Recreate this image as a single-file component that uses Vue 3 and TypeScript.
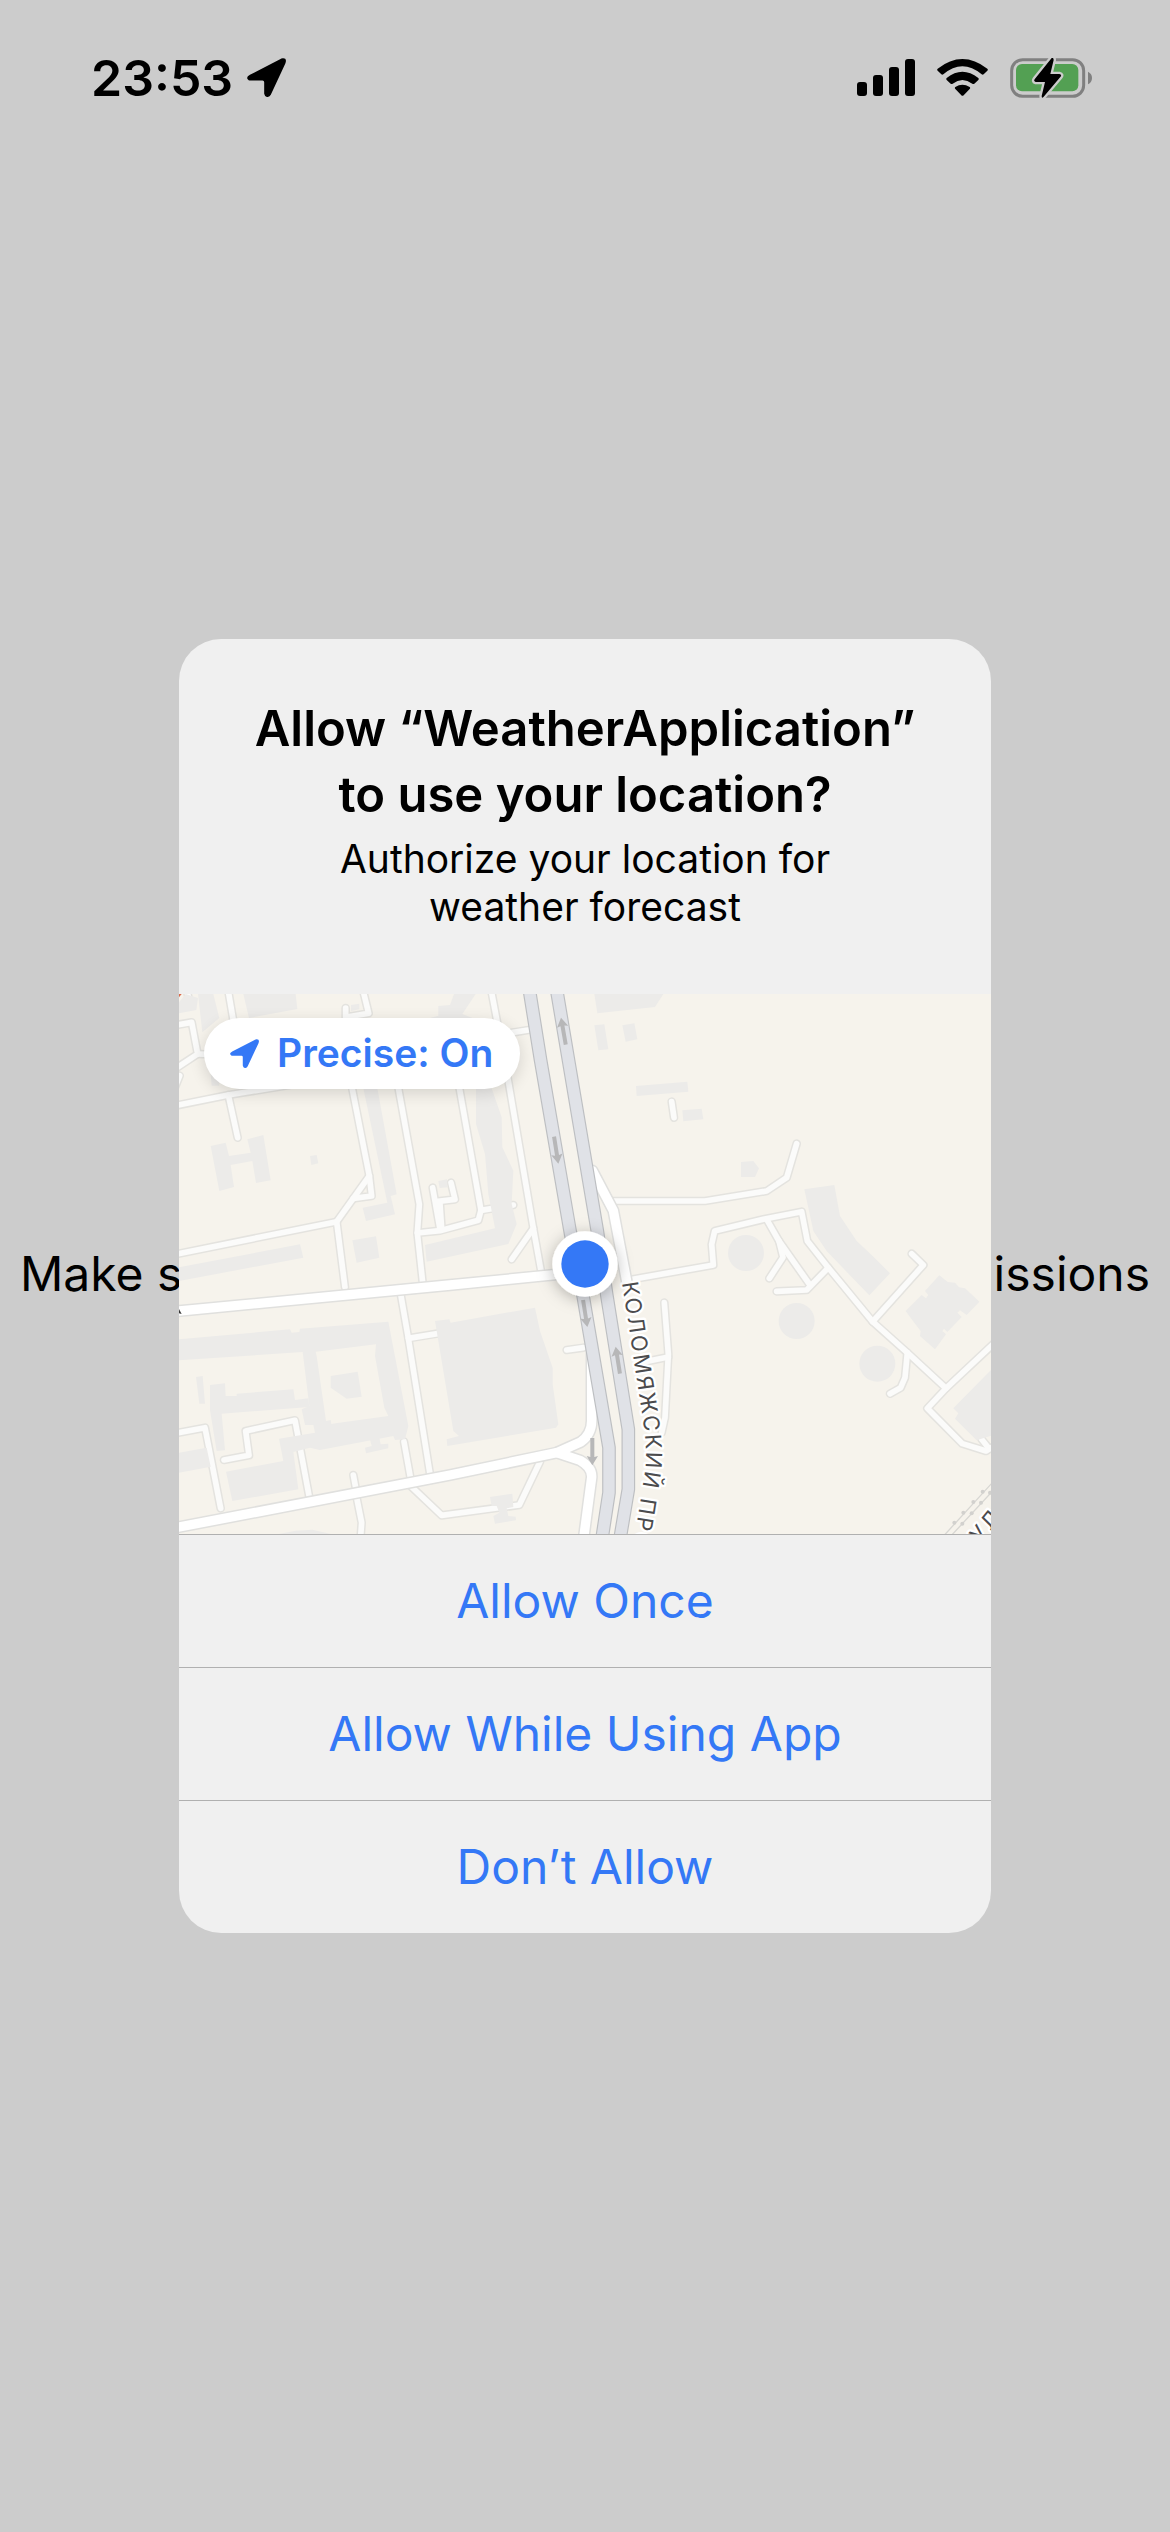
<script setup lang="ts">
interface Arrow {
  x: number
  y: number
  angle: number
}

interface Choice {
  id: string
  label: string
}

const choices: Choice[] = [
  { id: 'once', label: 'Allow Once' },
  { id: 'while-using', label: 'Allow While Using App' },
  { id: 'deny', label: 'Don’t Allow' },
]

const highways: string[] = [
  'M1050 -20 L1053 0 L1085 200 L1175 721 L1208 881 L1290 1361 V1496 L1268 1640',
  'M1132 -20 L1135 0 L1255 711 L1283 901 L1348 1306 V1486 L1322 1640',
]

const avenues: string[] = [
  'M-20 953 L813 873 L1218 833',
  'M-20 1603 L813 1443 L1133 1376 L1205 1344 Q1238 1320 1238 1280 V1080',
  'M1133 1376 L1203 1399 Q1240 1420 1238 1450 L1213 1640',
  'M1240 530 L1303 650 L1343 861',
]

const lanes: string[] = [
  'M20 -20 L28 8',
  'M-20 95 L38 85 L56 180 L-20 230',
  'M56 180 L110 182',
  'M-20 300 L2 245',
  'M146 -20 L163 80',
  'M550 -20 L569 58 L500 70 V42',
  'M-20 337 L148 303 L400 262',
  'M148 303 L176 431',
  'M513 250 L571 546 L578 606 L523 613',
  'M571 546 L473 683',
  'M-20 783 L473 683 L498 880',
  'M658 281 L721 631 L715 717 L731 865',
  'M761 581 L783 706',
  'M771 623 L828 616 L816 566',
  'M783 630 L788 704',
  'M715 717 L783 710 L898 679 L906 649 L841 281',
  'M906 649 L1003 633',
  'M935 -20 L988 261 L1063 703 L1086 830',
  'M1063 703 L998 796',
  'M998 116 L1048 108',
  'M1303 621 H1578 L1763 591 L1823 551 L1853 449',
  'M1478 323 L1485 371',
  'M1353 857 L1603 813 L1598 751 L1607 711 L1753 676 L1868 653 L1885 741 L1948 821 L2081 983 L2185 1076 L2301 1183 L2456 1038',
  'M1763 676 L1800 741 L1812 790 L1771 853',
  'M1800 741 L1893 873',
  'M1793 892 L1883 888 L1948 821',
  'M2198 779 L2233 813 L2081 983',
  'M2185 1076 L2178 1151 L2165 1181 L2133 1199',
  'M2301 1183 L2245 1243 L2350 1349 L2421 1371 L2456 1350',
  'M2408 1336 L2428 1361',
  'M666 906 L688 1033 L753 1440',
  'M688 1033 L780 1018',
  'M-20 1320 L78 1301 L125 1543',
  'M135 1398 L210 1384 L200 1311 L348 1279 L391 1510',
  'M523 1443 L530 1481',
  'M533 1511 L548 1586 L544 1640',
  'M675 1343 L695 1455',
  'M695 1476 L788 1564 L1021 1533 L1083 1403',
  'M1163 1068 L1213 1061',
  'M1456 926 L1468 1081 L1458 1271 L1448 1316',
  'M1468 1089 L1383 1106',
]

const buildings: string[] = [
  '57,0 103,0 121,72 70,115',
  '0,25 20,0 57,12 52,48 0,58',
  '193,0 350,0 355,45 210,72',
  '516,33 541,29 541,46 516,51',
  '743,75 778,65 778,36 813,33 825,0 890,0 850,60 888,75',
  '95,456 140,446 150,486 215,476 205,436 253,423 275,559 231,567 220,501 155,513 165,579 121,591',
  '393,486 413,483 418,508 397,513',
  '95,240 125,250 120,275 98,275',
  '553,283 595,283 653,601 635,606 648,661 561,681 551,641 625,626',
  '520,739 591,727 601,791 533,806',
  '0,820 363,751 373,791 0,861',
  '738,753 948,703 928,600 918,480 891,390 891,283 938,283 968,370 970,460 1003,530 998,630 1013,690 988,750 743,803',
  '778,561 804,556 806,580 782,582',
  '1246,0 1453,0 1428,39 1255,58',
  '1246,94 1276,91 1288,166 1258,169',
  '1330,94 1366,88 1375,136 1340,143',
  '1371,276 1525,263 1528,293 1373,306',
  '1510,349 1568,344 1573,376 1513,382',
  '1686,504 1723,501 1740,523 1728,549 1686,549',
  '1876,586 1966,573 1983,666 2033,741 2080,785 2133,838 2071,904 1943,771 1903,711',
  '2281,844 2306,864 2328,866 2340,880 2358,883 2401,923 2363,963 2343,949 2335,956 2348,969 2305,1014 2295,1004 2290,1011 2301,1021 2268,1066 2223,1026 2225,1011 2198,976 2180,951 2228,903 2241,913 2248,903 2238,891',
  '2436,1128 2323,1243 2338,1258 2328,1274 2393,1339 2436,1325',
  '768,981 811,976 815,986 1068,941 1083,1011 1121,1121 1121,1171 1138,1291 1131,1301 805,1356 803,1336 840,1326 823,1311',
  '933,1509 1000,1499 1003,1539 983,1543 988,1566 1010,1568 1011,1579 948,1589 943,1566 961,1556 953,1536 938,1536',
  '51,1149 71,1146 78,1229 61,1229',
  '0,1376 83,1361 95,1418 0,1436',
  '93,1173 138,1168 140,1206 173,1206 173,1199 343,1186 348,1218 388,1213 391,1239 128,1259 138,1369 113,1371 93,1249 93,1238',
  '455,1146 536,1133 548,1208 503,1214 455,1181',
  '558,1361 578,1356 573,1336 601,1331 605,1351 628,1349 628,1363 561,1378',
  '300,1620 350,1610 400,1607 455,1620',
]

const rounds: Array<[number, number]> = [
  [1701, 777],
  [1853, 981],
  [2095, 1109],
]

const arrows: Arrow[] = [
  { x: 1146, y: 71, angle: -10 },
  { x: 1138, y: 509, angle: 171 },
  { x: 1225, y: 999, angle: 171 },
  { x: 1310, y: 1058, angle: -9 },
  { x: 1240, y: 1414, angle: 180 },
]

const sleepers: Array<[number, number]> = [
  [2326, 1586], [2353, 1556], [2383, 1524], [2411, 1493],
  [2350, 1589], [2378, 1558], [2406, 1526], [2433, 1496],
]
</script>

<template>
  <div class="screen">
    <header class="status">
      <div class="status-left">
        <span class="clock">23:53</span>
        <svg class="nav" viewBox="0 0 118 118" aria-hidden="true">
          <path d="M9 51 Q-6 59 5 67 Q7 68 12 68 H47 Q52 68 52 73 V108 Q54 119 63 118 Q69 117 72 111 L116 17 Q122 0 108 1 Q104 1 100 4 Z" />
        </svg>
      </div>
      <div class="status-right">
        <svg class="signal" viewBox="0 0 174 111" aria-hidden="true">
          <rect x="0" y="69" width="30" height="42" rx="9" />
          <rect x="48" y="48" width="30" height="63" rx="9" />
          <rect x="96" y="24" width="30" height="87" rx="9" />
          <rect x="144" y="0" width="30" height="111" rx="9" />
        </svg>
        <svg class="wifi" viewBox="0 0 153 111" aria-hidden="true">
          <path d="M2 29 Q76 -29 151 29 Q154 32 151 35 L140 46 Q137 48 134 46 Q76 -2 19 46 Q16 48 13 46 L2 35 Q-1 32 2 29Z" />
          <path d="M29 57 Q76 19 124 57 Q127 60 124 63 L112 74 Q109 76 106 74 Q76 52 47 74 Q44 76 41 74 L29 63 Q26 60 29 57Z" />
          <path d="M55 84 Q76 70 98 84 Q101 87 98 90 L80 109 Q76 112 73 109 L55 90 Q52 87 55 84Z" />
        </svg>
        <svg class="battery" viewBox="0 0 246 120" aria-hidden="true">
          <rect x="5" y="5" width="216" height="110" rx="33" fill="none" stroke="#808080" stroke-width="9" />
          <path d="M234 41 Q246 47 246 60 Q246 73 234 79Z" fill="#808080" />
          <rect x="18" y="18" width="187" height="82" rx="18" fill="#53a053" />
          <path d="M125 0 Q131 -2 131 6 L121 48 H148 Q157 50 151 57 L101 116 Q95 123 95 114 L105 72 H77 Q69 70 75 62Z" fill="#000" stroke="#ccc" stroke-width="14" paint-order="stroke" stroke-linejoin="round" />
        </svg>
      </div>
    </header>

    <main class="stage">
      <p class="hint"><span>Make sure you have</span><span>permissions</span></p>

      <section class="alert" role="alertdialog" aria-labelledby="alert-title" aria-describedby="alert-text">
        <div class="message">
          <h1 id="alert-title">Allow “WeatherApplication”<br>to use your location?</h1>
          <p id="alert-text">Authorize your location for<br>weather forecast</p>
        </div>

        <div class="map">
          <svg class="map-art" viewBox="0 0 2436 1620" role="img" aria-label="Map">
            <defs>
              <path id="avenue-name" d="M1329 866 L1391 1271 Q1407 1371 1397 1441 L1368 1621 L1340 1800" />
              <filter id="pin-shadow" x="-50%" y="-50%" width="200%" height="200%">
                <feDropShadow dx="0" dy="8" stdDeviation="24" flood-color="#000" flood-opacity="0.28" />
              </filter>
            </defs>

            <rect width="2436" height="1620" fill="#f6f3ec" />
            <path d="M0 0 H8 L0 10Z" fill="#d9694a" />

            <g class="lane-edge"><path v-for="d in lanes" :key="d" :d="d" /></g>
            <g class="lane"><path v-for="d in lanes" :key="d" :d="d" /></g>

            <g fill="#ecebe9">
              <polygon v-for="p in buildings" :key="p" :points="p" />
              <circle v-for="[x, y] in rounds" :key="x" :cx="x" :cy="y" r="54" />
              <path
                fill-rule="evenodd"
                d="M0 1036 L333 1006 L338 1016 L361 1014 L363 1004 L628 983 L688 1296 L678 1336 L648 1338 L643 1326 L423 1368 L393 1361 L343 1374 L358 1486 L160 1521 L141 1433 L313 1401 L300 1334 L408 1316 L403 1293 L378 1293 L368 1246 L391 1236 L371 1074 L0 1099Z M410 1073 L413 1086 L441 1281 L455 1278 L457 1290 L470 1288 L628 1266 L616 1241 L588 1086 L591 1051Z"
              />
            </g>

            <g class="avenue-edge"><path v-for="d in avenues" :key="d" :d="d" /></g>
            <g class="avenue"><path v-for="d in avenues" :key="d" :d="d" /></g>
            <g class="highway-edge"><path v-for="d in highways" :key="d" :d="d" /></g>
            <g class="highway"><path v-for="d in highways" :key="d" :d="d" /></g>

            <g fill="#b7b7b8">
              <path
                v-for="a in arrows"
                :key="a.y"
                :transform="`translate(${a.x} ${a.y}) rotate(${a.angle})`"
                d="M0 0 L17 28 L6 25 V82 H-6 V25 L-17 28Z"
              />
            </g>

            <path d="M2290 1630 L2440 1466 M2312 1630 L2440 1492" class="rail" />
            <circle v-for="[x, y] in sleepers" :key="`${x}-${y}`" :cx="x" :cy="y" r="6" fill="#d2d1ce" />

            <path d="M0 945 L8 960 L0 958Z" fill="#333" />
            <text class="street"><textPath href="#avenue-name">КОЛОМЯЖСКИЙ ПРО</textPath></text>
            <text class="street" transform="translate(2404 1650) rotate(-50)">УЛ</text>

            <circle cx="1218" cy="810" r="98" fill="#fff" filter="url(#pin-shadow)" />
            <circle cx="1218" cy="810" r="71" fill="#3478f6" />
          </svg>

          <button class="precise" type="button" aria-pressed="true">
            <svg viewBox="0 0 118 118" aria-hidden="true">
              <path d="M9 51 Q-6 59 5 67 Q7 68 12 68 H47 Q52 68 52 73 V108 Q54 119 63 118 Q69 117 72 111 L116 17 Q122 0 108 1 Q104 1 100 4 Z" />
            </svg>
            <span>Precise: On</span>
          </button>
        </div>

        <div class="choices">
          <button v-for="choice in choices" :key="choice.id" type="button">{{ choice.label }}</button>
        </div>
      </section>
    </main>
  </div>
</template>

<style>
body {
  background: #ccc;
}
</style>

<style scoped>
.screen {
  display: flex;
  flex-direction: column;
  box-sizing: border-box;
  min-height: 100vh;
  padding-bottom: 102px;
  background: #ccc;
  color: #000;
  font-family: Inter, "Liberation Sans", sans-serif;
}

.status {
  display: flex;
  justify-content: space-between;
  align-items: center;
  box-sizing: border-box;
  height: 141px;
  padding: 14px 78px 0 91px;
}

.status-left,
.status-right {
  display: flex;
  align-items: center;
}

.status-left {
  gap: 14px;
}

.status-right {
  gap: 22px;
}

.clock {
  font-size: 50px;
  font-weight: 600;
  line-height: 60px;
}

.nav {
  width: 39px;
  height: 39px;
}

.signal {
  width: 58px;
  height: 37px;
}

.wifi {
  width: 51px;
  height: 37px;
}

.battery {
  width: 82px;
  height: 40px;
}

.stage {
  display: grid;
  flex: 1;
  align-items: center;
  justify-items: center;
}

.stage > * {
  grid-area: 1 / 1;
}

.hint {
  display: flex;
  justify-content: space-between;
  box-sizing: border-box;
  width: 100%;
  margin: 0;
  padding: 0 20px 24px;
  font-size: 48px;
  line-height: 60px;
}

.alert {
  width: calc(100% - 48px);
  max-width: 812px;
  overflow: hidden;
  border-radius: 42px;
  background: #f0f0f0;
  z-index: 1;
}

.message {
  padding: 57px 24px 63px;
  text-align: center;
}

h1 {
  margin: 0 0 7px;
  font-size: 49px;
  font-weight: 600;
  line-height: 66px;
}

.message p {
  margin: 0;
  font-size: 39px;
  line-height: 48px;
}

.map {
  position: relative;
}

.map-art {
  display: block;
  width: 100%;
}

.map-art g {
  stroke-linejoin: round;
  stroke-linecap: round;
}

.lane-edge,
.lane,
.avenue-edge,
.avenue,
.highway-edge,
.highway,
.rail {
  fill: none;
}

.lane-edge {
  stroke: #e4e3df;
  stroke-width: 26px;
}

.lane {
  stroke: #fbfbfa;
  stroke-width: 17px;
}

.avenue-edge {
  stroke: #e0e0de;
  stroke-width: 37px;
}

.avenue {
  stroke: #fff;
  stroke-width: 28px;
}

.highway-edge {
  stroke: #bdbfc2;
  stroke-width: 41px;
}

.highway {
  stroke: #e0e2e7;
  stroke-width: 34px;
}

.rail {
  stroke: #d8d7d3;
  stroke-width: 4px;
}

.street {
  fill: #4b4b4d;
  stroke: #fff;
  stroke-width: 14px;
  stroke-linejoin: round;
  paint-order: stroke;
  font-size: 66px;
  letter-spacing: 7px;
}

.precise {
  position: absolute;
  top: 24px;
  left: 25px;
  display: flex;
  align-items: center;
  gap: 18px;
  height: 71px;
  padding: 0 27px 0 26px;
  border: 0;
  border-radius: 36px;
  background: #fff;
  box-shadow: 0 4px 16px rgba(0, 0, 0, 0.14);
  color: #3478f6;
  font-family: inherit;
  font-size: 39px;
  font-weight: 600;
  line-height: 48px;
}

.precise svg {
  width: 29px;
  height: 29px;
  fill: currentColor;
}

.choices {
  display: flex;
  flex-direction: column;
}

.choices button {
  padding: 36px 24px;
  border: 0;
  border-top: 1px solid #b0b0b0;
  background: transparent;
  color: #3478f6;
  font-family: inherit;
  font-size: 48px;
  line-height: 60px;
}
</style>
